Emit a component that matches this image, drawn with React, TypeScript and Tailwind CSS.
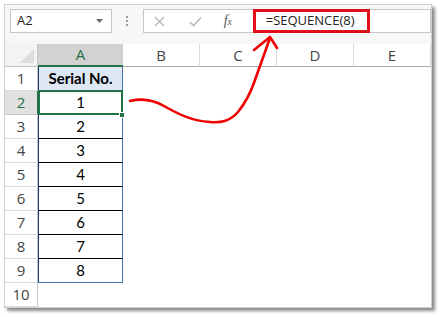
import React from "react";

const headerFont = { fontFamily: '"Open Sans","Noto Sans","Liberation Sans",sans-serif' };
const cellFont = { fontFamily: 'Lato,"Liberation Sans",sans-serif' };

const cols = [
  { l: "B", w: "w-[77px]" },
  { l: "C", w: "w-[77px]" },
  { l: "D", w: "w-[77px]" },
  { l: "E", w: "w-[77px]" },
];

function RowHeader({ n, active }: { n: number; active?: boolean }) {
  return (
    <div
      className={`w-[33px] h-full shrink-0 flex items-center justify-center text-[15px] border-b border-r ${
        active ? "bg-[#e1e1e1] text-[#217346] border-b-[#c8c8c8] border-r-[#217346]" : "bg-white text-[#444] border-b-[#dadada] border-r-[#c6c6c6]"
      }`}
      style={headerFont}
    >
      {n}
    </div>
  );
}

export default function App() {
  const values = ["Serial No.", "1", "2", "3", "4", "5", "6", "7", "8"];
  return (
    <div className="w-[441px] h-[317px] bg-white relative overflow-hidden">
      <div className="ml-[4px] mt-[4px] w-[428px] h-[304px] border border-[#d0d0d0] bg-white flex flex-col shadow-[3px_3px_3px_rgba(0,0,0,0.45)]">
        {/* formula bar */}
        <div className="h-[39px] bg-[#f7f7f7] flex items-start pt-[4px] pl-[5px]" style={headerFont}>
          <div className="w-[102px] h-[24px] bg-white border border-[#c6c6c6] flex items-center pl-[6px] pr-[8px] text-[13px] text-[#222]">
            <span className="flex-1">A2</span>
            <svg width="7" height="4" viewBox="0 0 7 4"><path d="M0 0 L7 0 L3.5 4 Z" fill="#6a6a6a" /></svg>
          </div>
          <div className="w-[31px] h-[24px] flex flex-col items-center justify-center gap-[2px]">
            <span className="w-[2px] h-[2px] bg-[#9a9a9a]" />
            <span className="w-[2px] h-[2px] bg-[#9a9a9a]" />
            <span className="w-[2px] h-[2px] bg-[#9a9a9a]" />
          </div>
          <div className="w-[289px] h-[24px] bg-white border border-[#c6c6c6] flex items-center">
            <div className="w-[109px] h-full flex items-center">
              <svg className="ml-[10px]" width="11" height="11" viewBox="0 0 11 11">
                <path d="M1 1 L10 10 M10 1 L1 10" stroke="#b8b8b8" strokeWidth="1.4" />
              </svg>
              <svg className="ml-[24px]" width="13" height="11" viewBox="0 0 13 11">
                <path d="M1 6 L4.5 9.5 L12 1.5" stroke="#b8b8b8" strokeWidth="1.6" fill="none" />
              </svg>
              <span className="ml-[22px] text-[#555] italic text-[14px] leading-none" style={{ fontFamily: '"Liberation Serif",serif' }}>
                f<span className="text-[10px]">x</span>
              </span>
            </div>
            <div className="h-[24px] w-[117px] -mt-[1px] border-[3px] border-[#e0101a] flex items-center pl-[10px] text-[13px] text-[#222]">
              =SEQUENCE(8)
            </div>
          </div>
        </div>
        {/* column headers */}
        <div className="flex h-[23px]" style={headerFont}>
          <div className="w-[33px] h-full bg-[#f3f3f3] border-b border-r border-[#c6c6c6] relative flex items-end justify-end p-[3px]">
            <svg width="14" height="14" viewBox="0 0 14 14"><path d="M14 0 L14 14 L0 14 Z" fill="#dcdcdc" /></svg>
          </div>
          <div className="w-[85px] h-full bg-[#d2d2d2] border-b-2 border-[#217346] flex items-center justify-center text-[15px] text-[#217346]">
            A
          </div>
          {cols.map((c) => (
            <div
              key={c.l}
              className={`${c.w} h-full bg-white border-b border-b-[#ababab] border-r border-r-[#dadada] flex items-center justify-center text-[15px] text-[#444]`}
            >
              {c.l}
            </div>
          ))}
        </div>
        {/* rows */}
        {Array.from({ length: 10 }).map((_, i) => {
          const v = values[i];
          const inTable = i < 9;
          return (
            <div key={i} className={`flex h-[24px] shrink-0 ${i === 1 ? "relative z-10" : ""}`}>
              <RowHeader n={i + 1} active={i === 1} />
              <div
                className={`w-[85px] h-full relative flex items-center justify-center text-[15px] text-black ${
                  inTable
                    ? `border-l border-l-[#1d3a78] border-r border-r-[#4a70b8] border-b ${i === 8 ? "border-b-[#4a70b8]" : "border-b-black"} ${i === 0 ? "bg-[#dde8f4] font-bold" : ""}`
                    : ""
                }`}
                style={cellFont}
              >
                {v}
                {i === 1 && (
                  <>
                    <div className="absolute -left-[1px] -top-[1px] -right-[1px] -bottom-[1px] border-2 border-[#217346]" />
                    <div className="absolute -right-[3px] -bottom-[4px] w-[6px] h-[6px] bg-[#217346] border border-white" />
                  </>
                )}
              </div>
            </div>
          );
        })}
      </div>
      <svg className="absolute left-0 top-0 pointer-events-none z-20" width="441" height="317" viewBox="0 0 441 317">
        <path
          d="M130 101 C 142 98, 152 99, 164 106 C 178 114, 192 121, 210 122 C 222 123, 230 121, 238 112 C 246 102, 251 92, 255 80 L 270 38"
          fill="none"
          stroke="#f00000"
          strokeWidth="2.6"
          strokeLinejoin="round"
          strokeLinecap="round"
        />
        <path d="M254 50 L270 37 L277 48" fill="none" stroke="#f00000" strokeWidth="2.6" strokeLinecap="round" strokeLinejoin="round" />
      </svg>
    </div>
  );
}
